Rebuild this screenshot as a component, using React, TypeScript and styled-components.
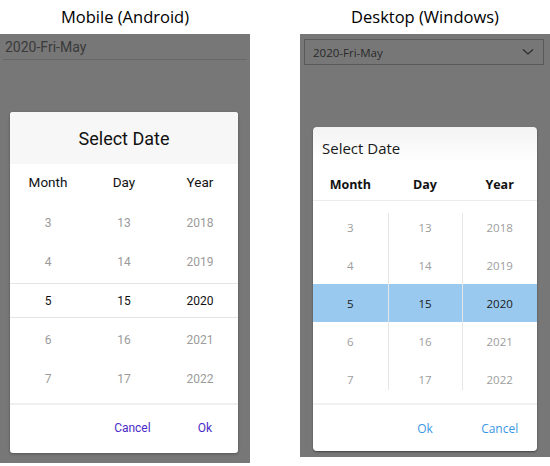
import React from "react";
import styled, { createGlobalStyle } from "styled-components";

const GlobalStyle = createGlobalStyle`
  body {
    margin: 0;
    background: #fff;
  }
`;

const Page = styled.div`
  display: flex;
  gap: 50px;
  width: 550px;
`;

const Section = styled.div`
  width: 250px;
  display: flex;
  flex-direction: column;
`;

const Caption = styled.div`
  height: 34px;
  line-height: 34px;
  text-align: center;
  font-family: "Open Sans", "Noto Sans", sans-serif;
  font-size: 16.5px;
  color: #000;
`;

const Backdrop = styled.div<{ $height: number }>`
  height: ${(p) => p.$height}px;
  background: #777777;
  display: flex;
  flex-direction: column;
`;

/* ---------- Android ---------- */

const Entry = styled.div`
  margin: 0 3px;
  height: 25px;
  border-bottom: 1px solid #686868;
  font-family: Roboto, sans-serif;
  font-size: 14px;
  line-height: 26px;
  color: #3a3a3a;
  padding-left: 2px;
`;

const MobileDialog = styled.div`
  margin: 52px 12px 0 10px;
  height: 341px;
  background: #fff;
  border-radius: 3px;
  overflow: hidden;
  box-shadow: 0 1px 3px rgba(0, 0, 0, 0.3);
  display: flex;
  flex-direction: column;
  font-family: Roboto, sans-serif;
`;

const MobileHeader = styled.div`
  height: 52px;
  background: #f7f7f7;
  display: flex;
  align-items: center;
  justify-content: center;
  font-size: 18px;
  color: #111;
`;

const Grid = styled.div`
  display: grid;
  grid-template-columns: repeat(3, 1fr);
`;

const MobileHead = styled.div`
  height: 36px;
  display: flex;
  align-items: center;
  justify-content: center;
  font-size: 13.5px;
  color: #111;
`;

const MobilePicker = styled(Grid)`
  padding-top: 3px;
`;

const MobileRow = styled.div<{ $selected?: boolean }>`
  position: relative;
  height: 39px;
  display: flex;
  align-items: center;
  justify-content: center;
  font-size: 12px;
  color: ${(p) => (p.$selected ? "#111" : "#9b9b9b")};

  ${(p) =>
    p.$selected &&
    `
    &::before, &::after {
      content: "";
      position: absolute;
      left: 0;
      right: 0;
      height: 1px;
      background: #e4e4e4;
    }
    &::before { top: 2px; }
    &::after { bottom: 2px; }
  `}
`;

const MobileFooter = styled.div`
  margin-top: 5px;
  border-top: 2px solid #f0f0f0;
  flex: 1;
  display: flex;
  align-items: center;
  justify-content: flex-end;
  gap: 47px;
  padding-right: 26px;
  padding-bottom: 2px;
`;

const MobileButton = styled.span`
  font-size: 12px;
  color: #4b2bc6;
`;

/* ---------- Windows ---------- */

const Combo = styled.div`
  margin: 5px 6px 0 4px;
  height: 24px;
  border: 1px solid #5a5a5a;
  display: flex;
  align-items: center;
  justify-content: space-between;
  padding: 0 9px 0 8px;
  font-family: "Open Sans", "Noto Sans", sans-serif;
  font-size: 11.5px;
  color: #2a2a2a;
`;

const DesktopDialog = styled.div`
  margin: 62px 13px 0 13px;
  height: 324px;
  border-radius: 4px;
  overflow: hidden;
  background: linear-gradient(#f3f3f3, #ffffff 36px);
  box-shadow: 0 1px 2px rgba(0, 0, 0, 0.45);
  display: flex;
  flex-direction: column;
  font-family: "Open Sans", "Noto Sans", sans-serif;
`;

const DesktopTitle = styled.div`
  height: 42px;
  padding: 0 9px;
  display: flex;
  align-items: center;
  font-size: 15px;
  color: #1a1a1a;
`;

const DesktopHeadRow = styled(Grid)`
  border-bottom: 1px solid #ececec;
`;

const DesktopHead = styled.div`
  height: 31px;
  display: flex;
  align-items: center;
  justify-content: center;
  font-size: 12.5px;
  font-weight: 700;
  color: #111;
`;

const DesktopColumn = styled.div<{ $divider?: boolean }>`
  position: relative;
  padding-top: 7px;

  ${(p) =>
    p.$divider &&
    `
    &::before {
      content: "";
      position: absolute;
      left: 0;
      top: 12px;
      bottom: 8px;
      width: 1px;
      background: #e6e6e6;
      z-index: 1;
    }
  `}
`;

const DesktopRow = styled.div<{ $selected?: boolean }>`
  height: 38px;
  display: flex;
  align-items: center;
  justify-content: center;
  font-size: 11.5px;
  color: ${(p) => (p.$selected ? "#1a1a1a" : "#9d9d9d")};
  background: ${(p) => (p.$selected ? "#99c9ef" : "transparent")};
`;

const DesktopFooter = styled.div`
  margin-top: 5px;
  border-top: 2px solid #f1f1f1;
  flex: 1;
  display: flex;
  align-items: center;
  padding-top: 1px;
`;

const Spacer = styled.span`
  flex: 1;
`;

const DesktopButton = styled.span`
  flex: 1;
  text-align: center;
  font-size: 12px;
  color: #3a97e4;
`;

const months = [3, 4, 5, 6, 7];
const days = [13, 14, 15, 16, 17];
const years = [2018, 2019, 2020, 2021, 2022];
const columns = [months, days, years];
const SELECTED = 2;

const Chevron = () => (
  <svg width="12" height="8" viewBox="0 0 12 8">
    <path d="M1 1.5 L6 6 L11 1.5" fill="none" stroke="#2a2a2a" strokeWidth="1.1" />
  </svg>
);

const App = () => {
  return (
    <>
      <GlobalStyle />
      <Page>
        <Section>
          <Caption>Mobile (Android)</Caption>
          <Backdrop $height={429}>
            <Entry>2020-Fri-May</Entry>
            <MobileDialog>
              <MobileHeader>Select Date</MobileHeader>
              <Grid>
                <MobileHead>Month</MobileHead>
                <MobileHead>Day</MobileHead>
                <MobileHead>Year</MobileHead>
              </Grid>
              <MobilePicker>
                {columns.map((col, c) => (
                  <div key={c}>
                    {col.map((v, i) => (
                      <MobileRow key={v} $selected={i === SELECTED}>
                        {v}
                      </MobileRow>
                    ))}
                  </div>
                ))}
              </MobilePicker>
              <MobileFooter>
                <MobileButton>Cancel</MobileButton>
                <MobileButton>Ok</MobileButton>
              </MobileFooter>
            </MobileDialog>
          </Backdrop>
        </Section>

        <Section>
          <Caption>Desktop (Windows)</Caption>
          <Backdrop $height={423}>
            <Combo>
              <span>2020-Fri-May</span>
              <Chevron />
            </Combo>
            <DesktopDialog>
              <DesktopTitle>Select Date</DesktopTitle>
              <DesktopHeadRow>
                <DesktopHead>Month</DesktopHead>
                <DesktopHead>Day</DesktopHead>
                <DesktopHead>Year</DesktopHead>
              </DesktopHeadRow>
              <Grid>
                {columns.map((col, c) => (
                  <DesktopColumn key={c} $divider={c > 0}>
                    {col.map((v, i) => (
                      <DesktopRow key={v} $selected={i === SELECTED}>
                        {v}
                      </DesktopRow>
                    ))}
                  </DesktopColumn>
                ))}
              </Grid>
              <DesktopFooter>
                <Spacer />
                <DesktopButton>Ok</DesktopButton>
                <DesktopButton>Cancel</DesktopButton>
              </DesktopFooter>
            </DesktopDialog>
          </Backdrop>
        </Section>
      </Page>
    </>
  );
};

export default App;
